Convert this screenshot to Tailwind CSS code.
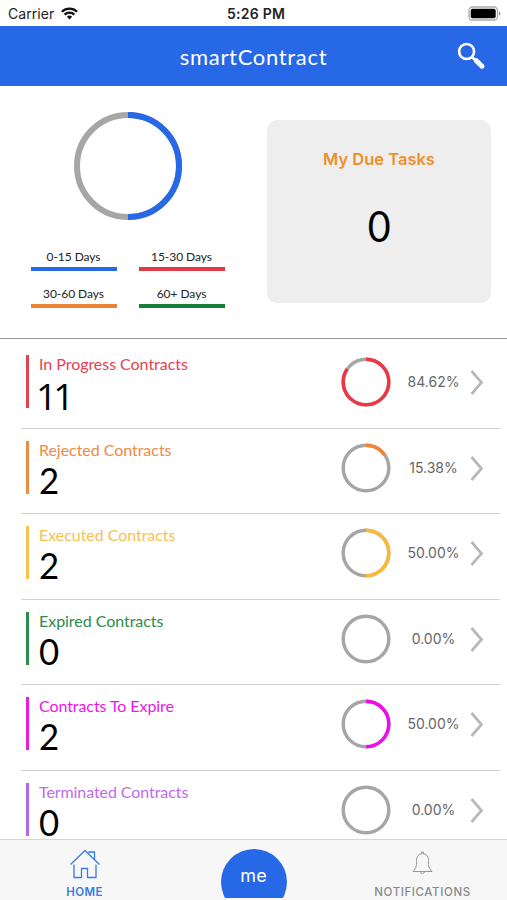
<!DOCTYPE html>
<html lang="en">
<head>
<meta charset="utf-8">
<title>smartContract</title>
<script src="https://cdn.jsdelivr.net/npm/@tailwindcss/browser@4"></script>
</head>
<body class="bg-white">
<div class="w-[507px] h-[900px] flex flex-col overflow-hidden bg-white font-['Lato',sans-serif] text-black">
  <header class="h-[26px] shrink-0 grid grid-cols-3 items-center pl-2 pr-[6px] font-['Inter',sans-serif] text-[#222]">
    <div class="flex items-center gap-[7px] pt-[1px]">
      <span class="text-[14px] leading-5 tracking-[0.05px]">Carrier</span>
      <svg width="17" height="13" viewBox="0 0 17 13" fill="none" stroke="#111" stroke-width="2.3"><path d="M.9 4.8a10.8 10.8 0 0 1 15.2 0M3.6 7.6a7 7 0 0 1 9.800 0"/><path d="M8.500 12.500 5.900 9.800a3.700 3.700 0 0 1 5.200 0z" fill="#111" stroke="none"/></svg>
    </div>
    <div class="text-center text-[14px] font-semibold leading-5 pt-[1px] pl-[3px] tracking-[0.25px] whitespace-nowrap">5:26 PM</div>
    <svg class="justify-self-end mt-px" width="33" height="16" viewBox="0 0 33 16"><rect x="1" y="1" width="28.500" height="13" rx="3.500" fill="#fff" stroke="#aaa" stroke-width="1.300"/><rect x="2.700" y="2.700" width="25" height="9.600" rx="2" fill="#000"/><path d="M31 5.500q1.400.6 1.400 2T31 9.500z" fill="#888"/></svg>
  </header>
  <div class="h-[60px] shrink-0 grid grid-cols-[1fr_auto_1fr] items-center bg-[#2668e6] text-white">
    <span></span>
    <h1 class="text-[22px] leading-7 tracking-[0.68px] pt-px">smartContract</h1>
    <svg class="justify-self-end mr-[21px]" width="29" height="28" viewBox="0 0 29 28" fill="none" stroke="#fff"><circle cx="9.600" cy="9.500" r="7.500" stroke-width="2.600"/><path d="M15 15l4 4" stroke-width="2.500"/><path d="M19.300 18.700l5.700 5.500" stroke-width="5" stroke-linecap="round"/></svg>
  </div>

  <section class="h-[253px] shrink-0 flex border-b-[1.5px] border-[#999]">
    <div class="w-[255px] pt-[26px] flex flex-col items-center">
      <svg width="108" height="108" viewBox="0 0 108 108" fill="none" stroke-width="6"><circle cx="54" cy="54" r="51" stroke="#a6a6a6"/><path d="M54 3a51 51 0 0 1 0 102" stroke="#2668e6"/></svg>
      <div class="mt-[27px] grid grid-cols-2 gap-x-[22px] gap-y-[3px] w-[194px] text-center text-[12px] leading-[19px] tracking-[-0.05px] text-[#222]">
        <div class="h-[34px] flex flex-col"><span>0-15 Days</span><i class="mt-px h-[4px] bg-[#2668e6]"></i></div>
        <div class="h-[34px] flex flex-col"><span>15-30 Days</span><i class="mt-px h-[4px] bg-[#e03c48]"></i></div>
        <div class="h-[34px] flex flex-col"><span>30-60 Days</span><i class="mt-px h-[4px] bg-[#ec8233]"></i></div>
        <div class="h-[34px] flex flex-col"><span>60+ Days</span><i class="mt-px h-[4px] bg-[#167e38]"></i></div>
      </div>
    </div>
    <div class="ml-[12px] mt-[34px] w-[224px] h-[183px] rounded-[10px] bg-[#eee] flex flex-col items-center font-['Inter',sans-serif]">
      <h2 class="mt-[27px] text-[16.5px] leading-6 font-semibold text-[#ee9029]">My Due Tasks</h2>
      <div class="mt-[31px] text-[42px] leading-[48px] font-['Lato',sans-serif] scale-x-[0.94]">0</div>
    </div>
  </section>

  <main class="flex-1 min-h-0 overflow-hidden pt-1 pl-[21px] pr-[7px]">
    <div class="h-[85.5px] flex border-b-[1.5px] border-[#d0d0d0] pl-[5px]">
      <i class="mt-[12px] w-[3px] h-[53px] bg-[#e2444f]"></i>
      <div class="ml-[10px] mt-[10px] flex-1"><h3 class="text-[16px] leading-[22px] tracking-[-0.04px] text-[#e8404e]">In Progress Contracts</h3><div class="text-[37px] leading-[40px] tracking-[-4px] -ml-[3px] mt-px font-['Open_Sans',sans-serif]">11</div></div>
      <svg class="mt-[14px]" width="50" height="50" viewBox="0 0 50 50" fill="none" stroke-width="3.500"><circle cx="25" cy="25" r="22.800" stroke="#a6a6a6"/><circle cx="25" cy="25" r="22.800" stroke="#ef3744" pathLength="100" stroke-dasharray="84.62 100" transform="rotate(-90 25 25)"/></svg>
      <span class="mt-[29px] w-[85px] text-center font-['Inter',sans-serif] text-[14px] leading-5 text-[#666]">84.62%</span>
      <svg class="mt-[26px] ml-[-6px] mr-[16px]" width="14" height="27" viewBox="0 0 14 27" fill="none" stroke="#b8b8b8" stroke-width="2.700"><path d="M1.500 2 11.500 13.500 1.500 25"/></svg>
    </div>
    <div class="h-[85.5px] flex border-b-[1.5px] border-[#d0d0d0] pl-[5px]">
      <i class="mt-[12px] w-[3px] h-[53px] bg-[#f08a42]"></i>
      <div class="ml-[10px] mt-[10px] flex-1"><h3 class="text-[16px] leading-[22px] tracking-[-0.04px] text-[#f08a42]">Rejected Contracts</h3><div class="text-[37px] leading-[38px] origin-left scale-x-[0.94]">2</div></div>
      <svg class="mt-[14px]" width="50" height="50" viewBox="0 0 50 50" fill="none" stroke-width="3.500"><circle cx="25" cy="25" r="22.800" stroke="#a6a6a6"/><circle cx="25" cy="25" r="22.800" stroke="#f58233" pathLength="100" stroke-dasharray="15.38 100" transform="rotate(-90 25 25)"/></svg>
      <span class="mt-[29px] w-[85px] text-center font-['Inter',sans-serif] text-[14px] leading-5 text-[#666]">15.38%</span>
      <svg class="mt-[26px] ml-[-6px] mr-[16px]" width="14" height="27" viewBox="0 0 14 27" fill="none" stroke="#b8b8b8" stroke-width="2.700"><path d="M1.500 2 11.500 13.500 1.500 25"/></svg>
    </div>
    <div class="h-[85.5px] flex border-b-[1.5px] border-[#d0d0d0] pl-[5px]">
      <i class="mt-[12px] w-[3px] h-[53px] bg-[#fbc04c]"></i>
      <div class="ml-[10px] mt-[10px] flex-1"><h3 class="text-[16px] leading-[22px] tracking-[-0.04px] text-[#fbc04c]">Executed Contracts</h3><div class="text-[37px] leading-[38px] origin-left scale-x-[0.94]">2</div></div>
      <svg class="mt-[14px]" width="50" height="50" viewBox="0 0 50 50" fill="none" stroke-width="3.500"><circle cx="25" cy="25" r="22.800" stroke="#a6a6a6"/><circle cx="25" cy="25" r="22.800" stroke="#fdb934" pathLength="100" stroke-dasharray="50 100" transform="rotate(-90 25 25)"/></svg>
      <span class="mt-[29px] w-[85px] text-center font-['Inter',sans-serif] text-[14px] leading-5 text-[#666]">50.00%</span>
      <svg class="mt-[26px] ml-[-6px] mr-[16px]" width="14" height="27" viewBox="0 0 14 27" fill="none" stroke="#b8b8b8" stroke-width="2.700"><path d="M1.500 2 11.500 13.500 1.500 25"/></svg>
    </div>
    <div class="h-[85.5px] flex border-b-[1.5px] border-[#d0d0d0] pl-[5px]">
      <i class="mt-[12px] w-[3px] h-[53px] bg-[#2c8c49]"></i>
      <div class="ml-[10px] mt-[10px] flex-1"><h3 class="text-[16px] leading-[22px] tracking-[-0.04px] text-[#2c8c49]">Expired Contracts</h3><div class="text-[37px] leading-[38px] origin-left scale-x-[0.94]">0</div></div>
      <svg class="mt-[14px]" width="50" height="50" viewBox="0 0 50 50" fill="none" stroke-width="3.500"><circle cx="25" cy="25" r="22.800" stroke="#a6a6a6"/></svg>
      <span class="mt-[29px] w-[85px] text-center font-['Inter',sans-serif] text-[14px] leading-5 text-[#666]">0.00%</span>
      <svg class="mt-[26px] ml-[-6px] mr-[16px]" width="14" height="27" viewBox="0 0 14 27" fill="none" stroke="#b8b8b8" stroke-width="2.700"><path d="M1.500 2 11.500 13.500 1.500 25"/></svg>
    </div>
    <div class="h-[85.5px] flex border-b-[1.5px] border-[#d0d0d0] pl-[5px]">
      <i class="mt-[12px] w-[3px] h-[53px] bg-[#e61ee0]"></i>
      <div class="ml-[10px] mt-[10px] flex-1"><h3 class="text-[16px] leading-[22px] tracking-[-0.08px] text-[#ec14e6]">Contracts To Expire</h3><div class="text-[37px] leading-[38px] origin-left scale-x-[0.94]">2</div></div>
      <svg class="mt-[14px]" width="50" height="50" viewBox="0 0 50 50" fill="none" stroke-width="3.500"><circle cx="25" cy="25" r="22.800" stroke="#a6a6a6"/><circle cx="25" cy="25" r="22.800" stroke="#f20aed" pathLength="100" stroke-dasharray="50 100" transform="rotate(-90 25 25)"/></svg>
      <span class="mt-[29px] w-[85px] text-center font-['Inter',sans-serif] text-[14px] leading-5 text-[#666]">50.00%</span>
      <svg class="mt-[26px] ml-[-6px] mr-[16px]" width="14" height="27" viewBox="0 0 14 27" fill="none" stroke="#b8b8b8" stroke-width="2.700"><path d="M1.500 2 11.500 13.500 1.500 25"/></svg>
    </div>
    <div class="h-[85.5px] flex pl-[5px]">
      <i class="mt-[12px] w-[3px] h-[53px] bg-[#b565ea]"></i>
      <div class="ml-[10px] mt-[10px] flex-1"><h3 class="text-[16px] leading-[22px] tracking-[-0.08px] text-[#bd6cec]">Terminated Contracts</h3><div class="text-[37px] leading-[38px] origin-left scale-x-[0.94]">0</div></div>
      <svg class="mt-[14px]" width="50" height="50" viewBox="0 0 50 50" fill="none" stroke-width="3.500"><circle cx="25" cy="25" r="22.800" stroke="#a6a6a6"/></svg>
      <span class="mt-[29px] w-[85px] text-center font-['Inter',sans-serif] text-[14px] leading-5 text-[#666]">0.00%</span>
      <svg class="mt-[26px] ml-[-6px] mr-[16px]" width="14" height="27" viewBox="0 0 14 27" fill="none" stroke="#b8b8b8" stroke-width="2.700"><path d="M1.500 2 11.500 13.500 1.500 25"/></svg>
    </div>
  </main>

  <nav class="h-[61px] shrink-0 grid grid-cols-3 border-t border-[#d5d5d5] bg-[#f7f7f7] overflow-hidden font-['Inter',sans-serif]">
    <div class="flex flex-col items-center text-[#377be8]">
      <svg class="mt-[9px]" width="32" height="31" viewBox="0 0 32 31" fill="none" stroke="currentColor" stroke-width="1.300" stroke-linejoin="round"><path d="M1.500 15.500 16 1.500l14.500 14M20 4V3h5.500v7.200M5 15.500v13h7.500v-9h6v9h8.500v-13"/></svg>
      <span class="mt-[4px] text-[11.5px] font-semibold leading-[16px] tracking-[0.4px]">HOME</span>
    </div>
    <div class="flex justify-center">
      <div class="mt-[9px] h-[49px] w-[66px] overflow-hidden"><div class="size-[66px] rounded-full bg-[#2668e6] text-white text-center text-[18px] leading-[54px]">me</div></div>
    </div>
    <div class="flex flex-col items-center text-[#8a8a8a]">
      <svg class="mt-[11px]" width="21" height="24" viewBox="0 0 21 24" fill="none" stroke="#999" stroke-width="1"><path d="M1 20.500q3.500-3 3.500-7V9.500q0-6.500 6-7 6 .5 6 7v4q0 4 3.500 7zM9.500 2.500V1h2v1.500M8.500 20.500q0 2 2 2t2-2"/></svg>
      <span class="mt-[9px] text-[11.5px] font-medium leading-[16px] tracking-[0.6px]">NOTIFICATIONS</span>
    </div>
  </nav>
</div>
</body>
</html>
